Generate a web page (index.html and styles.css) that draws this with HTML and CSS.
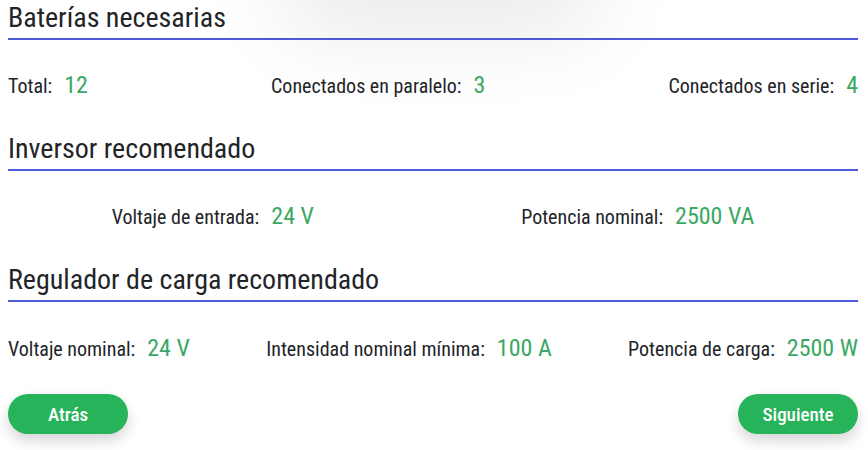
FILE: index.html
```html
<!DOCTYPE html>
<html lang="es">
<head>
<meta charset="utf-8">
<title>Resultados</title>
<link rel="stylesheet" href="styles.css">
</head>
<body>
<div class="page">
  <div class="ghost-shadow"></div>

  <h2 class="section-title first">Baterías necesarias</h2>
  <div class="row between">
    <div class="item"><span class="label">Total:</span><span class="value">12</span></div>
    <div class="item"><span class="label">Conectados en paralelo:</span><span class="value">3</span></div>
    <div class="item"><span class="label">Conectados en serie:</span><span class="value">4</span></div>
  </div>

  <h2 class="section-title">Inversor recomendado</h2>
  <div class="row around">
    <div class="item"><span class="label">Voltaje de entrada:</span><span class="value">24 V</span></div>
    <div class="item"><span class="label">Potencia nominal:</span><span class="value">2500 VA</span></div>
  </div>

  <h2 class="section-title">Regulador de carga recomendado</h2>
  <div class="row between last">
    <div class="item"><span class="label">Voltaje nominal:</span><span class="value">24 V</span></div>
    <div class="item"><span class="label">Intensidad nominal mínima:</span><span class="value">100 A</span></div>
    <div class="item"><span class="label">Potencia de carga:</span><span class="value">2500 W</span></div>
  </div>

  <div class="actions">
    <button class="btn">Atrás</button>
    <button class="btn">Siguiente</button>
  </div>
</div>
</body>
</html>
```
FILE: styles.css
```css
* { box-sizing: border-box; }
html {
  margin: 0;
  padding: 0;
  background: #ffffff;
  overflow: hidden;
}
body {
  margin: 0;
  padding: 0;
  font-family: Roboto, "Liberation Sans", sans-serif;
  font-stretch: condensed;
  color: #222428;
}
.page {
  position: relative;
  display: flex;
  flex-direction: column;
  padding: 0 10px 0 8px;
  height: 450px;
}
.ghost-shadow {
  position: absolute;
  top: -80px;
  left: 280px;
  width: 320px;
  height: 80px;
  border-radius: 40px;
  box-shadow: 0 24px 90px rgba(0, 0, 0, 0.11);
  z-index: -1;
}
.section-title {
  margin: 32px 0 0 0;
  font-size: 28px;
  font-weight: 400;
  line-height: 32px;
  padding-bottom: 4px;
  border-bottom: 2px solid #4c5ad9;
  color: #222428;
}
.section-title.first { margin-top: 2px; }
.row {
  display: flex;
  align-items: baseline;
  margin-top: 29px;
  height: 32px;
  line-height: 32px;
}
.row.last { margin-top: 30px; }
.between { justify-content: space-between; }
.around { justify-content: space-around; }
.item {
  display: flex;
  align-items: baseline;
  gap: 12px;
}
.label {
  font-size: 20px;
  color: #222428;
}
.value {
  font-size: 24px;
  color: #3aa862;
}
.actions {
  display: flex;
  justify-content: space-between;
  margin-top: 30px;
}
.btn {
  width: 120px;
  height: 40px;
  border: none;
  border-radius: 20px;
  background: #27b35a;
  color: #ffffff;
  font-family: Roboto, "Liberation Sans", sans-serif;
  font-stretch: condensed;
  font-size: 19px;
  font-weight: 500;
  box-shadow: 0 7px 14px rgba(0, 0, 0, 0.16);
  cursor: pointer;
}
```
